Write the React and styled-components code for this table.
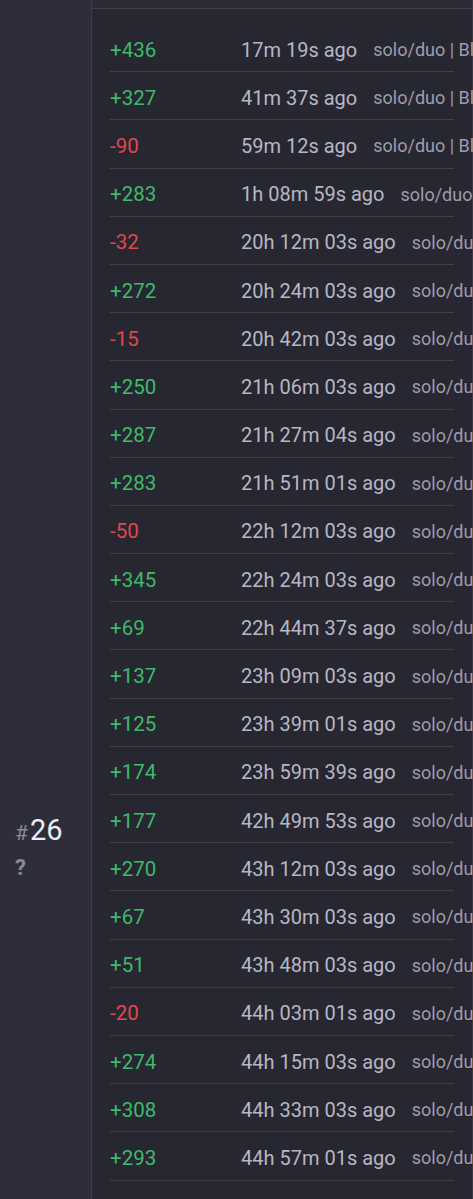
import React from "react";
import styled, { createGlobalStyle } from "styled-components";

const Global = createGlobalStyle`
  html, body { margin: 0; padding: 0; background: #2e2e3a; overflow: hidden; }
  body { font-family: Roboto, "Open Sans", sans-serif; }
`;

const Table = styled.div`
  display: flex;
  width: 473px;
  min-height: 1199px;
  background: #2e2e3a;
`;

const RankCell = styled.div`
  flex: none;
  width: 92px;
  box-sizing: border-box;
  border-right: 1px solid #3b3b48;
  padding: 814px 0 0 15px;
  display: flex;
  flex-direction: column;
  gap: 7px;
`;

const Rank = styled.div`
  display: flex;
  align-items: baseline;
  color: #ececf2;
  font-size: 29px;
  line-height: 32px;
`;

const Hash = styled.span`
  color: #8b8b99;
  font-size: 21px;
  margin-right: 2px;
`;

const Unknown = styled.span`
  color: #8b8b99;
  font-size: 22px;
  font-weight: 700;
  line-height: 24px;
`;

const History = styled.div`
  width: 380px;
  flex: none;
  background: #272731;
  border-right: 1px solid #3a3a46;
  display: flex;
  flex-direction: column;
`;

const TopBand = styled.div`
  height: 8px;
  background: #2b2b36;
  border-bottom: 1px solid #41414e;
`;

const List = styled.div`
  padding: 15px 18px 0 18px;
  display: flex;
  flex-direction: column;
`;

const Row = styled.div`
  height: 48.19px;
  box-sizing: border-box;
  padding-top: 4px;
  border-bottom: 1px solid #3f3f4b;
  display: flex;
  align-items: center;
  white-space: nowrap;
`;

const Delta = styled.span`
  width: 131px;
  flex: none;
  font-size: 20.5px;
  color: ${(p) => (p.$neg ? "#e0484d" : "#3dba6c")};
`;

const Time = styled.span`
  flex: none;
  font-size: 20px;
  color: #b7b7c3;
`;

const Mode = styled.span`
  flex: none;
  margin-left: 16px;
  font-size: 18px;
  color: #9d9dab;
`;

const rows = [
  ["+436", "17m 19s ago"],
  ["+327", "41m 37s ago"],
  ["-90", "59m 12s ago"],
  ["+283", "1h 08m 59s ago"],
  ["-32", "20h 12m 03s ago"],
  ["+272", "20h 24m 03s ago"],
  ["-15", "20h 42m 03s ago"],
  ["+250", "21h 06m 03s ago"],
  ["+287", "21h 27m 04s ago"],
  ["+283", "21h 51m 01s ago"],
  ["-50", "22h 12m 03s ago"],
  ["+345", "22h 24m 03s ago"],
  ["+69", "22h 44m 37s ago"],
  ["+137", "23h 09m 03s ago"],
  ["+125", "23h 39m 01s ago"],
  ["+174", "23h 59m 39s ago"],
  ["+177", "42h 49m 53s ago"],
  ["+270", "43h 12m 03s ago"],
  ["+67", "43h 30m 03s ago"],
  ["+51", "43h 48m 03s ago"],
  ["-20", "44h 03m 01s ago"],
  ["+274", "44h 15m 03s ago"],
  ["+308", "44h 33m 03s ago"],
  ["+293", "44h 57m 01s ago"],
];

export default function App() {
  return (
    <>
      <Global />
      <Table>
        <RankCell>
          <Rank>
            <Hash>#</Hash>26
          </Rank>
          <Unknown>?</Unknown>
        </RankCell>
        <History>
          <TopBand />
          <List>
            {rows.map(([d, t], i) => (
              <Row key={i}>
                <Delta $neg={d.startsWith("-")}>{d}</Delta>
                <Time>{t}</Time>
                <Mode>solo/duo | Blitz</Mode>
              </Row>
            ))}
          </List>
        </History>
      </Table>
    </>
  );
}
